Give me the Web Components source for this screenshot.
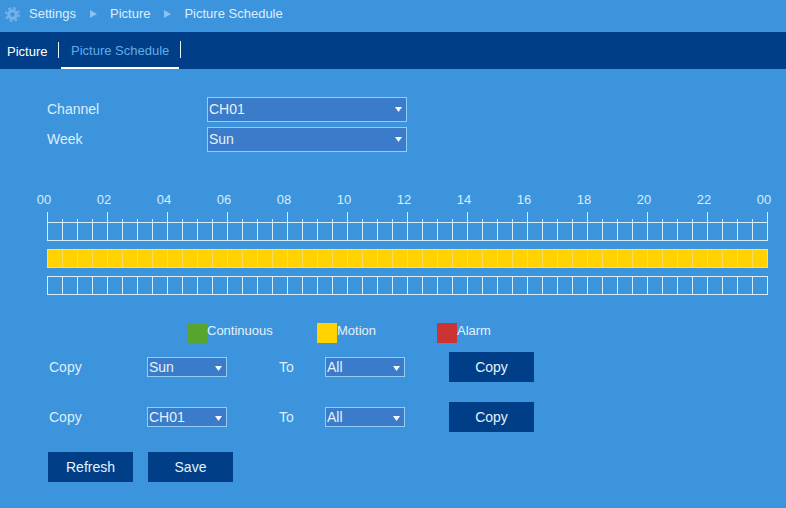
<!DOCTYPE html>
<html>
<head>
<meta charset="utf-8">
<title>Picture Schedule</title>
<style>
    html, body {
        margin: 0;
        height: 100%;
        overflow: hidden;
        background: #3c94dc;
        color: #e3f2fd;
        font-family: "Liberation Sans", Arial, sans-serif;
    }
</style>
</head>
<body>
<aplicacion-horario></aplicacion-horario>

<script>
class BarraRuta extends HTMLElement {
    constructor() {
        super();
        this.attachShadow({ mode: "open" });
        this.shadowRoot.innerHTML = `
            <style>
                :host {
                    display: flex;
                    align-items: center;
                    height: 32px;
                    padding: 0 0 5px 5px;
                    box-sizing: border-box;
                    font-size: 13px;
                    color: #dceefc;
                }
                svg { width: 15px; height: 15px; margin: 1px 9px 0 0; flex: none; }
                .flecha {
                    width: 0;
                    height: 0;
                    margin: 0 13px 0 14px;
                    border-left: 7px solid #8cc2ee;
                    border-top: 4px solid transparent;
                    border-bottom: 4px solid transparent;
                }
            </style>
            <svg viewBox="0 0 16 16">
                <circle cx="8" cy="8" r="6.8" fill="none" stroke="#74b2ec" stroke-width="2.4" stroke-dasharray="2.67 2.67"/>
                <circle cx="8" cy="8" r="4" fill="none" stroke="#74b2ec" stroke-width="3.2"/>
            </svg>
            <span>Settings</span><i class="flecha"></i>
            <span>Picture</span><i class="flecha"></i>
            <span>Picture Schedule</span>
        `;
    }
}

class BarraPestanas extends HTMLElement {
    constructor() {
        super();
        this.attachShadow({ mode: "open" });
        this.shadowRoot.innerHTML = `
            <style>
                :host {
                    display: flex;
                    align-items: center;
                    height: 37px;
                    background: #003f87;
                    font-size: 13px;
                }
                .tab {
                    display: flex;
                    align-items: center;
                    height: 37px;
                    box-sizing: border-box;
                    padding-top: 1px;
                }
                .uno { width: 58px; padding-left: 7px; color: #fff; }
                .dos {
                    width: 118px;
                    padding-left: 10px;
                    color: #62ace9;
                    border-bottom: 2px solid #fff;
                }
                .sep { width: 1px; height: 16px; background: #e8f4fd; margin-top: -2px; }
                .sep.a { margin-right: 2px; }
                .sep.b { margin-left: 1px; height: 17px; margin-top: -3px; }
            </style>
            <div class="tab uno">Picture</div>
            <i class="sep a"></i>
            <div class="tab dos">Picture Schedule</div>
            <i class="sep b"></i>
        `;
    }
}

class CajaSelect extends HTMLElement {
    constructor() {
        super();
        this.attachShadow({ mode: "open" });
        this.shadowRoot.innerHTML = `
            <style>
                :host {
                    display: flex;
                    align-items: center;
                    justify-content: space-between;
                    box-sizing: border-box;
                    width: var(--ancho, 80px);
                    height: var(--alto, 20px);
                    padding: 0 4px var(--abajo, 0) 1px;
                    background: #3a7cc9;
                    border: 1px solid #96cbf4;
                    font-size: 14px;
                    color: #e3f2fd;
                }
                svg { width: 7px; height: 5px; margin-top: 2px; flex: none; }
            </style>
            <slot></slot>
            <svg viewBox="0 0 7 5"><path d="M0 0H7L3.5 5Z" fill="#f4f9fe"/></svg>
        `;
    }
}

class BotonAccion extends HTMLElement {
    constructor() {
        super();
        this.attachShadow({ mode: "open" });
        this.shadowRoot.innerHTML = `
            <style>
                :host {
                    display: flex;
                    align-items: center;
                    justify-content: center;
                    width: 85px;
                    height: 30px;
                    flex: none;
                    background: #003f87;
                    color: #e3f2fd;
                    font-size: 14px;
                }
            </style>
            <slot></slot>
        `;
    }
}

class RejillaHorario extends HTMLElement {
    constructor() {
        super();
        this.attachShadow({ mode: "open" });
    }

    connectedCallback() {
        let horas = "";
        for (let h = 0; h <= 24; h += 2) {
            horas += `<span>${String(h % 24).padStart(2, "0")}</span>`;
        }

        // una marca cada media hora, larga en las horas pares
        let marcas = "";
        for (let i = 0; i <= 48; i++) {
            marcas += `<i class="${i % 4 === 0 ? "larga" : ""}"></i>`;
        }

        const celdas = "<b></b>".repeat(48);

        this.shadowRoot.innerHTML = `
            <style>
                :host {
                    display: block;
                    margin: 41px 0 0 47px;
                    width: 721px;
                }
                .horas {
                    display: grid;
                    grid-template-columns: repeat(13, 60px);
                    margin-left: -33px;
                    height: 14px;
                    line-height: 14px;
                    font-size: 13px;
                    color: #d8ecfc;
                    text-align: center;
                }
                .regla {
                    display: grid;
                    grid-template-columns: repeat(49, 15px);
                    height: 10px;
                    margin-top: 5px;
                    width: 721px;
                    overflow: hidden;
                }
                .regla i {
                    width: 1px;
                    height: 3px;
                    margin-top: 7px;
                    background: #d8edfb;
                }
                .regla i.larga { height: 10px; margin-top: 0; }
                .fila {
                    display: grid;
                    grid-template-columns: repeat(48, 15px);
                    box-sizing: border-box;
                    height: 19px;
                    width: 721px;
                    border: solid #d8edfb;
                    border-width: 1px 1px 1px 0;
                    margin-bottom: 8px;
                }
                .fila b { border-left: 1px solid #d8edfb; }
                .fila.llena {
                    background: #ffd200;
                    border-color: #f2de84;
                }
                .fila.llena b { border-left-color: #f8dc62; }
                .fila.llena b:first-child { border-left-color: #f2de84; }
                .fila:last-child { margin-bottom: 0; }
            </style>
            <div class="horas">${horas}</div>
            <div class="regla">${marcas}</div>
            <div class="fila">${celdas}</div>
            <div class="fila llena">${celdas}</div>
            <div class="fila">${celdas}</div>
        `;
    }
}

class ItemLeyenda extends HTMLElement {
    constructor() {
        super();
        this.attachShadow({ mode: "open" });
        this.shadowRoot.innerHTML = `
            <style>
                :host {
                    display: flex;
                    width: var(--paso, 130px);
                    font-size: 13px;
                    line-height: 15px;
                    color: #e3f2fd;
                }
                .color { width: 20px; height: 20px; background: var(--color); }
            </style>
            <div class="color"></div>
            <slot></slot>
        `;
    }
}

class FilaCopia extends HTMLElement {
    constructor() {
        super();
        this.attachShadow({ mode: "open" });
        this.shadowRoot.innerHTML = `
            <style>
                :host {
                    display: flex;
                    align-items: center;
                    height: 30px;
                    margin-bottom: 20px;
                    padding-left: 49px;
                    font-size: 14px;
                    color: #dceefc;
                }
                .etq { width: 98px; flex: none; }
                .a { width: 52px; flex: none; }
                .to { width: 46px; flex: none; }
                .hueco { width: 44px; flex: none; }
            </style>
            <span class="etq">Copy</span>
            <caja-select>${this.getAttribute("origen")}</caja-select>
            <span class="a"></span>
            <span class="to">To</span>
            <caja-select>All</caja-select>
            <span class="hueco"></span>
            <boton-accion>Copy</boton-accion>
        `;
    }
}

class AplicacionHorario extends HTMLElement {
    constructor() {
        super();
        this.attachShadow({ mode: "open" });
        this.shadowRoot.innerHTML = `
            <style>
                :host { display: block; height: 508px; overflow: hidden; }
                .form {
                    display: grid;
                    grid-template-columns: 160px 200px;
                    row-gap: 5px;
                    align-items: center;
                    padding: 28px 0 0 47px;
                    font-size: 14px;
                    color: #dceefc;
                }
                .form span { padding-bottom: 2px; }
                .form caja-select { --ancho: 200px; --alto: 25px; --abajo: 2px; }
                .leyenda { display: flex; margin: 28px 0 9px; padding-left: 187px; }
                .pie { display: flex; gap: 15px; padding-left: 48px; }
            </style>
            <barra-ruta></barra-ruta>
            <barra-pestanas></barra-pestanas>
            <div class="form">
                <span>Channel</span><caja-select>CH01</caja-select>
                <span>Week</span><caja-select>Sun</caja-select>
            </div>
            <rejilla-horario></rejilla-horario>
            <div class="leyenda">
                <item-leyenda style="--color:#57a52e">Continuous</item-leyenda>
                <item-leyenda style="--color:#ffd200; --paso:120px">Motion</item-leyenda>
                <item-leyenda style="--color:#cc3333">Alarm</item-leyenda>
            </div>
            <fila-copia origen="Sun"></fila-copia>
            <fila-copia origen="CH01"></fila-copia>
            <div class="pie">
                <boton-accion>Refresh</boton-accion>
                <boton-accion>Save</boton-accion>
            </div>
        `;
    }
}

customElements.define("barra-ruta", BarraRuta);
customElements.define("barra-pestanas", BarraPestanas);
customElements.define("caja-select", CajaSelect);
customElements.define("boton-accion", BotonAccion);
customElements.define("rejilla-horario", RejillaHorario);
customElements.define("item-leyenda", ItemLeyenda);
customElements.define("fila-copia", FilaCopia);
customElements.define("aplicacion-horario", AplicacionHorario);
</script>
</body>
</html>
